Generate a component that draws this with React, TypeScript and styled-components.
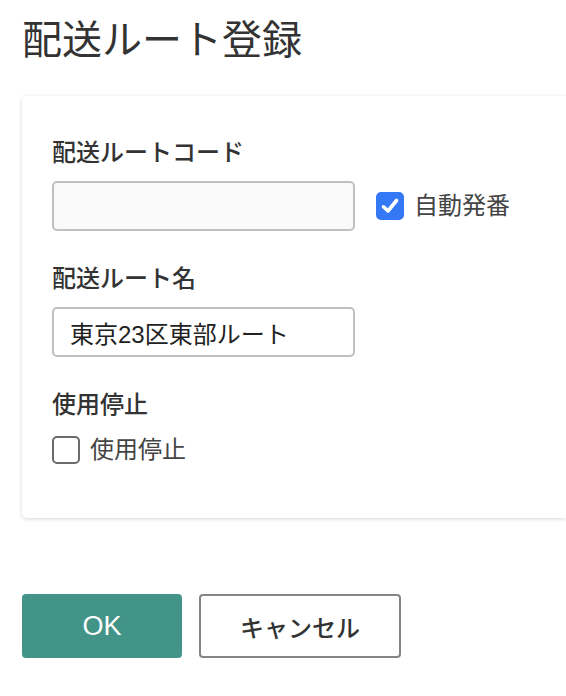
import React, { useState } from 'react';
import styled, { createGlobalStyle } from 'styled-components';

const GlobalStyle = createGlobalStyle`
  html, body {
    margin: 0;
    padding: 0;
    background: #fff;
    overflow: hidden;
  }
  body {
    font-family: 'Liberation Sans', 'Noto Sans CJK JP', sans-serif;
    color: #333;
  }
`;

const CheckBox = ({ checked, onChange }: { checked: boolean; onChange: () => void }) => (
  <Box $checked={checked} onClick={onChange}>
    {checked && (
      <svg width="22" height="22" viewBox="0 0 22 22">
        <path
          d="M4.5 11.8 L9 16 L17.5 5.5"
          fill="none"
          stroke="#fff"
          strokeWidth="3.6"
          strokeLinecap="round"
          strokeLinejoin="round"
        />
      </svg>
    )}
  </Box>
);

const App = () => {
  const [autoNumber, setAutoNumber] = useState(true);
  const [disabled, setDisabled] = useState(false);
  const [code, setCode] = useState('');
  const [name, setName] = useState('東京23区東部ルート');

  return (
    <Page>
      <GlobalStyle />
      <Title>配送ルート登録</Title>

      <Card>
        <Field>
          <Label>配送ルートコード</Label>
          <Row>
            <Input $readonly value={code} onChange={(e) => setCode(e.target.value)} />
            <CheckLabel>
              <CheckBox checked={autoNumber} onChange={() => setAutoNumber(!autoNumber)} />
              自動発番
            </CheckLabel>
          </Row>
        </Field>

        <Field>
          <Label>配送ルート名</Label>
          <Input value={name} onChange={(e) => setName(e.target.value)} />
        </Field>

        <Field>
          <Label>使用停止</Label>
          <CheckLabel>
            <CheckBox checked={disabled} onChange={() => setDisabled(!disabled)} />
            使用停止
          </CheckLabel>
        </Field>
      </Card>

      <Buttons>
        <Button $primary>OK</Button>
        <Button>キャンセル</Button>
      </Buttons>
    </Page>
  );
};

export default App;

const Page = styled.div`
  padding: 16px 0 0 22px;
`;

const Title = styled.h1`
  margin: 0 0 32px;
  font-size: 40px;
  line-height: 48px;
  font-weight: 400;
  color: #333;
`;

const Card = styled.div`
  width: 544px;
  margin-right: -60px;
  box-sizing: border-box;
  padding: 40px 30px 51px;
  background: #fff;
  border-radius: 5px 0 0 5px;
  box-shadow: 0 1px 4px rgba(0, 0, 0, 0.16);
  display: flex;
  flex-direction: column;
  gap: 31px;
`;

const Field = styled.div`
  display: flex;
  flex-direction: column;
  align-items: flex-start;
  gap: 11px;
`;

const Label = styled.div`
  font-size: 24px;
  line-height: 34px;
  font-weight: 500;
  color: #333;
`;

const Row = styled.div`
  display: flex;
  align-items: center;
  gap: 21px;
`;

const Input = styled.input<{ $readonly?: boolean }>`
  width: 303px;
  height: 50px;
  box-sizing: border-box;
  padding: 0 16px;
  border: 2px solid #c0c0c0;
  border-radius: 5px;
  background: ${(p) => (p.$readonly ? '#f9f9f9' : '#fff')};
  font-family: 'Liberation Sans', 'Noto Sans CJK JP', sans-serif;
  font-size: 24px;
  color: #222;
  outline: none;
`;

const CheckLabel = styled.label`
  display: flex;
  align-items: center;
  gap: 10px;
  font-size: 24px;
  line-height: 34px;
  color: #444;
  cursor: pointer;
  user-select: none;
`;

const Box = styled.span<{ $checked: boolean }>`
  width: 28px;
  height: 28px;
  box-sizing: border-box;
  border-radius: 5px;
  display: flex;
  align-items: center;
  justify-content: center;
  background: ${(p) => (p.$checked ? '#3478f6' : '#fff')};
  border: ${(p) => (p.$checked ? 'none' : '2px solid #6b6b6b')};
`;

const Buttons = styled.div`
  display: flex;
  gap: 17px;
  margin-top: 76px;
`;

const Button = styled.button<{ $primary?: boolean }>`
  height: 64px;
  width: ${(p) => (p.$primary ? '160px' : '202px')};
  border-radius: 4px;
  font-family: 'Liberation Sans', 'Noto Sans CJK JP', sans-serif;
  font-size: ${(p) => (p.$primary ? '27px' : '24px')};
  font-weight: ${(p) => (p.$primary ? 400 : 500)};
  cursor: pointer;
  background: ${(p) => (p.$primary ? '#439488' : '#fff')};
  color: ${(p) => (p.$primary ? '#fff' : '#333')};
  border: ${(p) => (p.$primary ? 'none' : '2px solid #858585')};
`;
